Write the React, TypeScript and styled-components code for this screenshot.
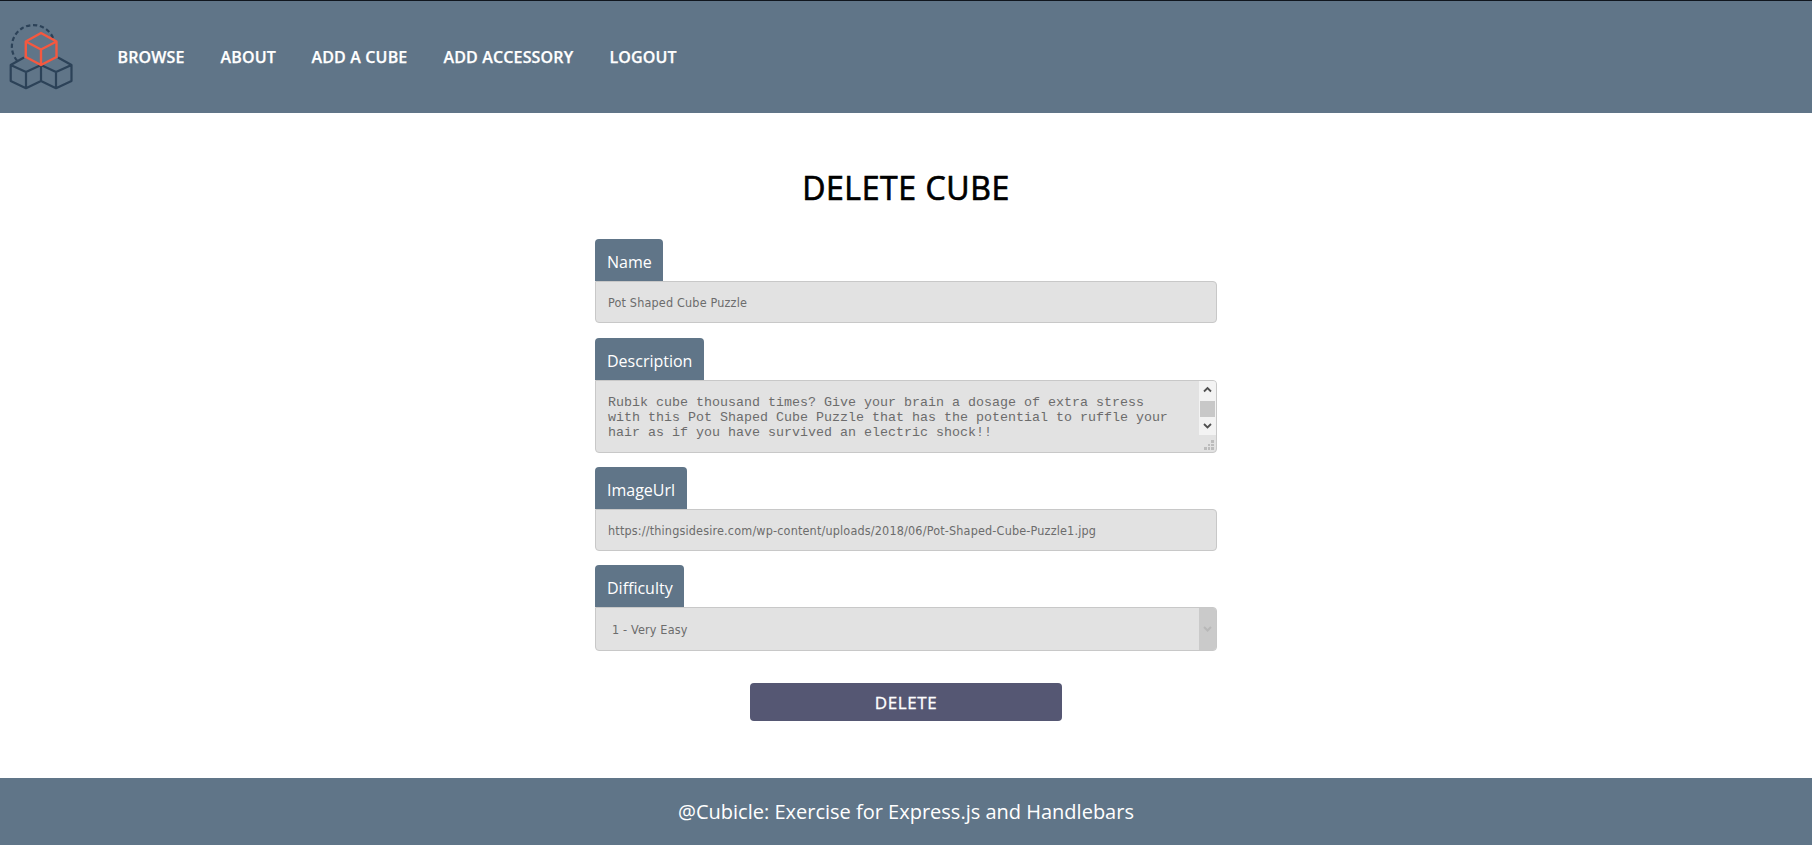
import React from "react";
import styled, { createGlobalStyle } from "styled-components";

const slate = "#607588";

const GlobalStyle = createGlobalStyle`
  * { box-sizing: border-box; }
  body {
    margin: 0;
    background: #fff;
    font-family: "Open Sans", "Noto Sans", sans-serif;
    overflow: hidden;
  }
`;

const Page = styled.div`
  display: flex;
  flex-direction: column;
  height: 847px;
  border-top: 1px solid #10161e;
`;

const Header = styled.header`
  display: flex;
  align-items: center;
  height: 112px;
  padding-left: 5px;
  background: ${slate};
`;

const Logo = styled.svg`
  width: 72px;
  height: 80px;
  flex: none;
`;

const Nav = styled.nav`
  display: flex;
  gap: 36px;
  margin-left: 40.5px;
`;

const NavLink = styled.a<{ $width: number }>`
  width: ${(p) => p.$width}px;
  color: #fff;
  font-size: 16px;
  font-weight: 600;
  line-height: 22px;
  letter-spacing: 0.15px;
  -webkit-text-stroke: 0.25px #fff;
  white-space: nowrap;
`;

const Main = styled.main`
  display: flex;
  flex-direction: column;
  align-items: center;
  height: 665px;
  padding-top: 53px;
`;

const Title = styled.h1`
  margin: 0;
  font-size: 32px;
  font-weight: 500;
  line-height: 44px;
  letter-spacing: 0.6px;
  -webkit-text-stroke: 0.7px #000;
  color: #000;
`;

const Form = styled.form`
  display: flex;
  flex-direction: column;
  align-items: center;
  width: 622px;
  margin-top: 29px;
`;

const Field = styled.div<{ $gap: number }>`
  display: flex;
  flex-direction: column;
  align-items: flex-start;
  width: 100%;
  margin-bottom: ${(p) => p.$gap}px;
`;

const Label = styled.label<{ $width: number }>`
  width: ${(p) => p.$width}px;
  height: 42px;
  padding: 12px 0 0 12px;
  border-radius: 4px 4px 0 0;
  background: ${slate};
  color: #fff;
  font-size: 16px;
  line-height: 22px;
  white-space: nowrap;
`;

const Control = styled.div<{ $height: number; $indent?: number }>`
  display: flex;
  align-items: center;
  width: 100%;
  height: ${(p) => p.$height}px;
  padding-left: ${(p) => p.$indent ?? 12}px;
  border: 1px solid #c8c8c8;
  border-radius: 0 4px 4px 4px;
  background: #e2e2e2;
  overflow: hidden;
  color: #6c6c6c;
  font-family: "DejaVu Sans Condensed", "DejaVu Sans", sans-serif;
  font-stretch: condensed;
  font-size: 12.5px;
  white-space: nowrap;
`;

const Value = styled.span`
  flex: 1;
  letter-spacing: 0.17px;
`;

const Paragraph = styled.p`
  flex: 1;
  margin: 0;
  padding-top: 2px;
  font-family: "Liberation Mono", monospace;
  font-size: 13.333px;
  line-height: 15px;
  white-space: pre;
`;

const ScrollColumn = styled.div`
  display: flex;
  flex-direction: column;
  align-self: stretch;
  justify-content: space-between;
  width: 17px;
`;

const ScrollTrack = styled.svg`
  width: 17px;
  height: 54px;
`;

const Grip = styled.svg`
  width: 17px;
  height: 17px;
`;

const SelectArrow = styled.div`
  display: flex;
  align-items: center;
  justify-content: center;
  align-self: stretch;
  width: 17px;
  background: #cacaca;
`;

const DeleteButton = styled.button`
  width: 312px;
  height: 38px;
  padding: 0;
  border: 0;
  border-radius: 4px;
  background: #555773;
  color: #fff;
  font-family: inherit;
  font-size: 17px;
  font-weight: 500;
  letter-spacing: 0.6px;
  line-height: 39px;
  -webkit-text-stroke: 0.3px #fff;
`;

const Footer = styled.footer`
  height: 67px;
  background: ${slate};
  color: #fff;
  font-size: 20px;
  line-height: 67px;
  text-align: center;
`;

const links = [
  { text: "BROWSE", width: 67 },
  { text: "ABOUT", width: 55 },
  { text: "ADD A CUBE", width: 96 },
  { text: "ADD ACCESSORY", width: 130 },
  { text: "LOGOUT", width: 68 },
];

const description = [
  "Rubik cube thousand times? Give your brain a dosage of extra stress",
  "with this Pot Shaped Cube Puzzle that has the potential to ruffle your",
  "hair as if you have survived an electric shock!!",
].join("\n");

function CubesLogo() {
  return (
    <Logo viewBox="5 17 72 80" fill="none" strokeWidth="2.2">
      <path d="M17 60.500A21.500 21.500 0 1 1 53.500 39" stroke="#2c4258" strokeDasharray="4.200 2.700" />
      <g stroke="#2c4258" strokeLinejoin="round">
        <path d="M24 57.500L10.700 65V81L26 88.200L41 81V65L26 72L10.700 65M26 72V88M58 57.500L71.500 65V81L56 88.200L41 81M71.500 65L56 72L41 65M56 72V88" />
      </g>
      <path d="M41 33L56.500 41.500V57L41 65L25.800 57V41.500ZM25.800 41.500L41 49.500L56.500 41.500M41 49.500V65" stroke="#f5583f" strokeWidth="2.400" strokeLinejoin="round" />
    </Logo>
  );
}

export default function App() {
  return (
    <>
      <GlobalStyle />
      <Page>
        <Header>
          <CubesLogo />
          <Nav>
            {links.map((l) => (
              <NavLink key={l.text} $width={l.width}>{l.text}</NavLink>
            ))}
          </Nav>
        </Header>
        <Main>
          <Title>DELETE CUBE</Title>
          <Form>
            <Field $gap={15}>
              <Label $width={68}>Name</Label>
              <Control $height={42}><Value>Pot Shaped Cube Puzzle</Value></Control>
            </Field>
            <Field $gap={14}>
              <Label $width={109}>Description</Label>
              <Control $height={73}>
                <Paragraph>{description}</Paragraph>
                <ScrollColumn>
                  <ScrollTrack viewBox="0 0 17 54">
                    <rect width="17" height="54" fill="#f3f3f3" />
                    <rect x="1" y="20" width="15" height="16" fill="#c8c8c8" />
                    <path d="M5 10.500L8.500 7L12 10.500M5 43L8.500 46.500L12 43" fill="none" stroke="#505050" strokeWidth="1.800" />
                  </ScrollTrack>
                  <Grip viewBox="0 0 17 17" fill="#bcbcbc">
                    <path d="M12 5h3v3h-3zM12 9h3v2h-3zM12 12h3v3h-3zM9 9h2v2h-2zM9 12h2v3h-2zM5 12h3v3h-3z" />
                  </Grip>
                </ScrollColumn>
              </Control>
            </Field>
            <Field $gap={14}>
              <Label $width={92}>ImageUrl</Label>
              <Control $height={42}>
                <Value>https://thingsidesire.com/wp-content/uploads/2018/06/Pot-Shaped-Cube-Puzzle1.jpg</Value>
              </Control>
            </Field>
            <Field $gap={32}>
              <Label $width={89}>Difficulty</Label>
              <Control $height={44} $indent={16}>
                <Value>1 - Very Easy</Value>
                <SelectArrow>
                  <svg width="9" height="6" viewBox="0 0 9 6" fill="none" stroke="#b8b8b8" strokeWidth="2">
                    <path d="M1 1L4.500 4.500L8 1" />
                  </svg>
                </SelectArrow>
              </Control>
            </Field>
            <DeleteButton type="button">DELETE</DeleteButton>
          </Form>
        </Main>
        <Footer>@Cubicle: Exercise for Express.js and Handlebars</Footer>
      </Page>
    </>
  );
}
